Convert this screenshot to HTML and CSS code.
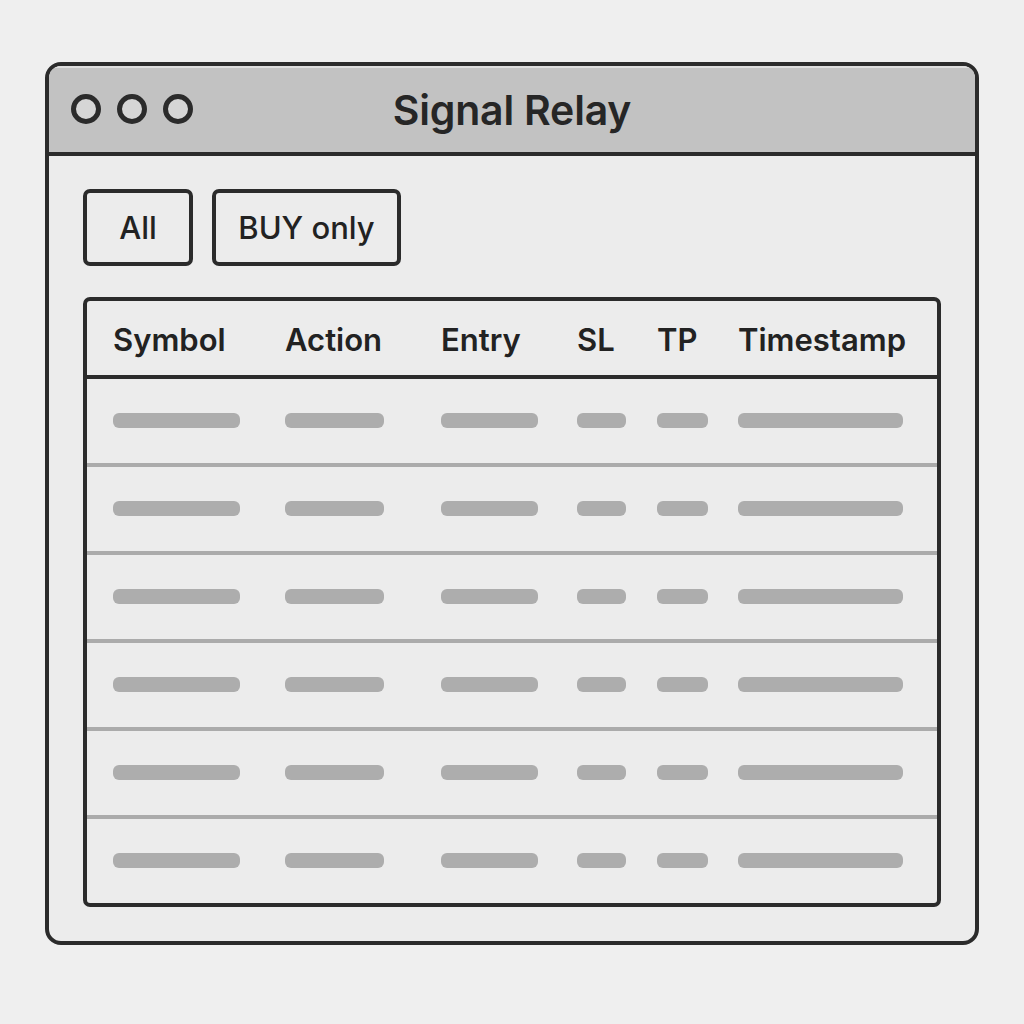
FILE: index.html
```html
<!DOCTYPE html>
<html lang="en">
<head>
<meta charset="utf-8">
<title>Signal Relay</title>
<link rel="stylesheet" href="styles.css">
</head>
<body>
<div class="page">
  <div class="window">
    <div class="titlebar">
      <div class="lights">
        <span class="light"></span>
        <span class="light"></span>
        <span class="light"></span>
      </div>
      <div class="title">Signal Relay</div>
      <div class="spacer"></div>
    </div>
    <div class="content">
      <div class="filters">
        <button class="btn btn-all">All</button>
        <button class="btn btn-buy">BUY only</button>
      </div>
      <div class="table">
        <div class="thead">
          <div>Symbol</div><div>Action</div><div>Entry</div><div>SL</div><div>TP</div><div>Timestamp</div>
        </div>
        <div class="row"><span class="bar w-sym"></span><span class="bar w-act"></span><span class="bar w-ent"></span><span class="bar w-sl"></span><span class="bar w-tp"></span><span class="bar w-ts"></span></div>
        <div class="row"><span class="bar w-sym"></span><span class="bar w-act"></span><span class="bar w-ent"></span><span class="bar w-sl"></span><span class="bar w-tp"></span><span class="bar w-ts"></span></div>
        <div class="row"><span class="bar w-sym"></span><span class="bar w-act"></span><span class="bar w-ent"></span><span class="bar w-sl"></span><span class="bar w-tp"></span><span class="bar w-ts"></span></div>
        <div class="row"><span class="bar w-sym"></span><span class="bar w-act"></span><span class="bar w-ent"></span><span class="bar w-sl"></span><span class="bar w-tp"></span><span class="bar w-ts"></span></div>
        <div class="row"><span class="bar w-sym"></span><span class="bar w-act"></span><span class="bar w-ent"></span><span class="bar w-sl"></span><span class="bar w-tp"></span><span class="bar w-ts"></span></div>
        <div class="row"><span class="bar w-sym"></span><span class="bar w-act"></span><span class="bar w-ent"></span><span class="bar w-sl"></span><span class="bar w-tp"></span><span class="bar w-ts"></span></div>
      </div>
    </div>
  </div>
</div>
</body>
</html>
```
FILE: styles.css
```css
html, body {
  margin: 0;
  padding: 0;
  background: #efefef;
}
body {
  font-family: Inter, "Liberation Sans", sans-serif;
  color: #222;
}
.page {
  padding: 62px 45px 0 45px;
}
.window {
  width: 934px;
  height: 883px;
  box-sizing: border-box;
  border: 4px solid #2b2b2b;
  border-radius: 16px;
  background: #ececec;
  overflow: hidden;
  display: flex;
  flex-direction: column;
}
.titlebar {
  height: 91px;
  box-sizing: border-box;
  background: #c2c2c2;
  border-bottom: 4px solid #2b2b2b;
  box-shadow: inset 0 2px 0 #dedede;
  display: grid;
  grid-template-columns: 1fr auto 1fr;
  align-items: center;
  padding: 0 22px;
}
.lights {
  display: flex;
  gap: 16px;
}
.light {
  width: 30px;
  height: 30px;
  box-sizing: border-box;
  border: 5px solid #2b2b2b;
  border-radius: 50%;
  background: #d6d6d6;
}
.title {
  font-size: 41px;
  font-weight: 600;
  color: #262626;
  letter-spacing: -0.2px;
  padding-top: 2px;
}
.content {
  flex: 1;
  padding: 33px 34px 34px 34px;
  display: flex;
  flex-direction: column;
}
.filters {
  display: flex;
  gap: 19px;
}
.btn {
  height: 77px;
  box-sizing: border-box;
  border: 4px solid #2b2b2b;
  border-radius: 7px;
  background: #ececec;
  font-family: Inter, "Liberation Sans", sans-serif;
  font-size: 31px;
  font-weight: 500;
  color: #222;
  padding: 0;
}
.btn-all { width: 110px; }
.btn-buy { width: 189px; }
.table {
  margin-top: 31px;
  border: 4px solid #2b2b2b;
  border-radius: 7px;
  background: #ececec;
  overflow: hidden;
}
.thead, .row {
  display: grid;
  grid-template-columns: 172px 156px 136px 80px 81px 1fr;
  padding: 0 0 0 26px;
  align-items: center;
}
.thead {
  height: 78px;
  box-sizing: border-box;
  border-bottom: 4px solid #2b2b2b;
  font-size: 31px;
  font-weight: 600;
  color: #222;
  padding-top: 2px;
}
.row {
  height: 88px;
  box-sizing: border-box;
  border-bottom: 4px solid #ababab;
}
.row:last-child {
  border-bottom: none;
  height: 84px;
}
.bar {
  display: block;
  height: 15px;
  border-radius: 6px;
  background: #adadad;
  margin-top: -2px;
}
.w-sym { width: 127px; }
.w-act { width: 99px; }
.w-ent { width: 97px; }
.w-sl { width: 49px; }
.w-tp { width: 51px; }
.w-ts { width: 165px; }
```
